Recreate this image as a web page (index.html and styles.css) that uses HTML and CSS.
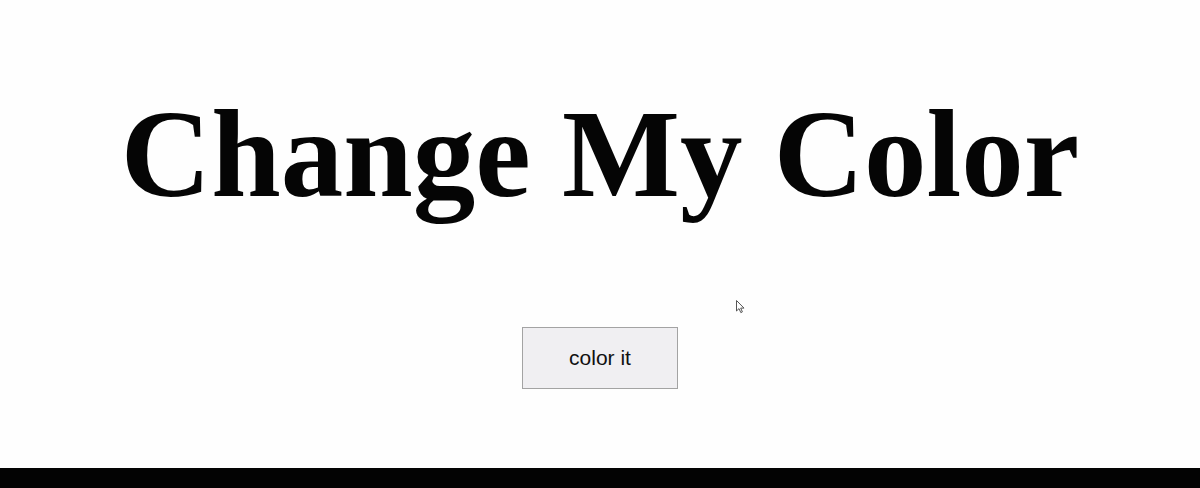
FILE: index.html
```html
<!DOCTYPE html>
<html>
<head>
<meta charset="utf-8">
<link rel="stylesheet" href="styles.css">
</head>
<body>
<div class="page">
  <main class="content">
    <h1 class="title">Change My Color</h1>
    <button class="btn">color it</button>
  </main>
  <div class="bottom-bar"></div>
</div>
<svg class="cursor" width="10" height="14" viewBox="0 0 10 14"><path d="M0.5 0.5 L0.5 11 L3 8.6 L4.8 12.6 L6.4 11.9 L4.7 8.1 L8 8.1 Z" fill="#fff" stroke="#555" stroke-width="1"/></svg>
</body>
</html>
```
FILE: styles.css
```css
html, body {
  margin: 0;
  padding: 0;
  height: 100%;
  background: #fefefe;
}
.page {
  height: 488px;
  display: flex;
  flex-direction: column;
}
.content {
  flex: 1;
  display: flex;
  flex-direction: column;
  align-items: center;
}
.title {
  margin: 82px 0 0 0;
  font-family: "Liberation Serif", "Times New Roman", serif;
  font-weight: bold;
  font-size: 125px;
  line-height: 144px;
  color: #050505;
}
.btn {
  margin-top: 101px;
  width: 156px;
  height: 62px;
  background: #f0eff2;
  border: 1px solid #a3a3a3;
  font-family: "Liberation Sans", Arial, sans-serif;
  font-size: 21px;
  color: #111;
  padding: 0;
}
.bottom-bar {
  height: 20px;
  background: #030303;
}
.cursor {
  position: absolute;
  left: 736px;
  top: 300px;
}
```
